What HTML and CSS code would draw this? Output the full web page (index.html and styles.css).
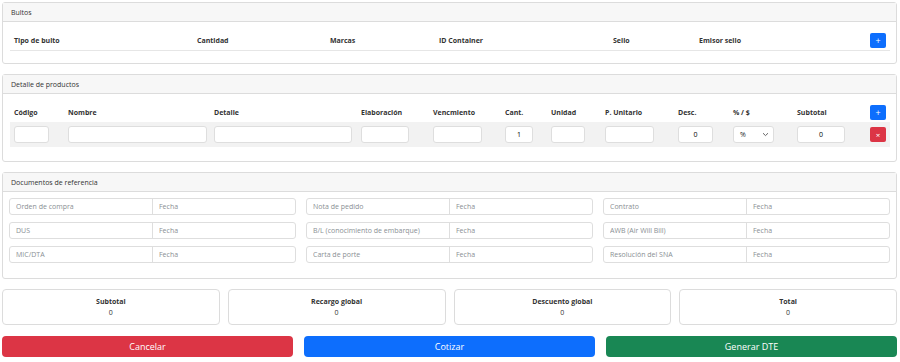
FILE: index.html
```html
<!DOCTYPE html>
<html lang="es">
<head>
  <meta charset="UTF-8" />
  <title>Documento</title>
  <link rel="stylesheet" href="styles.css">
</head>
<body>
  <div class="page">

    <!-- Bultos -->
    <div class="card">
      <div class="card-header">Bultos</div>
      <div class="card-body">
        <div class="grid bultos head">
          <div>Tipo de bulto</div>
          <div>Cantidad</div>
          <div>Marcas</div>
          <div>ID Container</div>
          <div>Sello</div>
          <div>Emisor sello</div>
          <div><button class="btn-sm add">+</button></div>
        </div>
      </div>
    </div>

    <!-- Detalle de productos -->
    <div class="card">
      <div class="card-header">Detalle de productos</div>
      <div class="card-body">
        <div class="grid productos head">
          <div>Código</div>
          <div>Nombre</div>
          <div>Detalle</div>
          <div>Elaboración</div>
          <div>Vencmiento</div>
          <div>Cant.</div>
          <div>Unidad</div>
          <div>P. Unitario</div>
          <div>Desc.</div>
          <div>% / $</div>
          <div>Subtotal</div>
          <div><button class="btn-sm add">+</button></div>
        </div>
        <div class="grid productos row">
          <div><input class="in w35" type="text"></div>
          <div><input class="in w139" type="text"></div>
          <div><input class="in w138" type="text"></div>
          <div><input class="in w48" type="text"></div>
          <div><input class="in w49" type="text"></div>
          <div><input class="in w28 num" type="text" value="1"></div>
          <div><input class="in w34" type="text"></div>
          <div><input class="in w49" type="text"></div>
          <div><input class="in w35 num" type="text" value="0"></div>
          <div>
            <div class="select">
              <span>%</span>
              <svg width="7" height="5" viewBox="0 0 7 5"><path d="M1 1.2 L3.5 3.6 L6 1.2" fill="none" stroke="#555" stroke-width="0.9"/></svg>
            </div>
          </div>
          <div><input class="in w48 num" type="text" value="0"></div>
          <div><button class="btn-sm del">×</button></div>
        </div>
      </div>
    </div>

    <!-- Documentos de referencia -->
    <div class="card">
      <div class="card-header">Documentos de referencia</div>
      <div class="card-body docs">
        <div class="group"><input placeholder="Orden de compra"><input placeholder="Fecha"></div>
        <div class="group"><input placeholder="Nota de pedido"><input placeholder="Fecha"></div>
        <div class="group"><input placeholder="Contrato"><input placeholder="Fecha"></div>
        <div class="group"><input placeholder="DUS"><input placeholder="Fecha"></div>
        <div class="group"><input placeholder="B/L (conocimiento de embarque)"><input placeholder="Fecha"></div>
        <div class="group"><input placeholder="AWB (Air Will Bill)"><input placeholder="Fecha"></div>
        <div class="group"><input placeholder="MIC/DTA"><input placeholder="Fecha"></div>
        <div class="group"><input placeholder="Carta de porte"><input placeholder="Fecha"></div>
        <div class="group"><input placeholder="Resolución del SNA"><input placeholder="Fecha"></div>
      </div>
    </div>

    <!-- Totales -->
    <div class="totals">
      <div class="total-box"><strong>Subtotal</strong><span>0</span></div>
      <div class="total-box"><strong>Recargo global</strong><span>0</span></div>
      <div class="total-box"><strong>Descuento global</strong><span>0</span></div>
      <div class="total-box"><strong>Total</strong><span>0</span></div>
    </div>

    <div class="actions">
      <button class="btn red">Cancelar</button>
      <button class="btn blue">Cotizar</button>
      <button class="btn green">Generar DTE</button>
    </div>

  </div>
</body>
</html>
```

FILE: styles.css
```css
body {
  margin: 0;
  font-family: 'Open Sans', sans-serif;
  font-size: 7px;
  color: #212529;
  background: #fff;
}

.page {
  padding: 2px 3px 0 2px;
}

.card {
  border: 1px solid #dcdcdc;
  border-radius: 3px;
  margin-bottom: 10px;
}

.card-header {
  background: #f7f7f7;
  border-bottom: 1px solid #dcdcdc;
  padding: 5px 8px 4px;
  line-height: 9px;
  color: #333;
}

.card-body {
  padding: 8px 6px 7px 7px;
}

.grid {
  display: grid;
  align-items: center;
}

.grid > div {
  padding: 0 4px;
}

.head {
  height: 20px;
  font-weight: bold;
  color: #333;
  border-bottom: 1px solid #e6e6e6;
}

.bultos {
  grid-template-columns: 183px 133px 109px 174px 86px 171px 1fr;
  margin-bottom: 5px;
}

.productos {
  grid-template-columns: 54px 146px 147px 72px 72px 46px 54px 73px 55px 64px 73px 1fr;
}

.productos.head {
  border-bottom: none;
}

.productos.row {
  background: #f2f2f2;
  height: 25px;
  margin-bottom: 7px;
}

.in {
  box-sizing: border-box;
  height: 17px;
  border: 1px solid #dedede;
  border-radius: 3px;
  background: #fff;
  font-family: inherit;
  font-size: 7px;
  padding: 0 4px;
  display: block;
}

.in.num {
  text-align: center;
}

.w28 { width: 28px; }
.w34 { width: 34px; }
.w35 { width: 35px; }
.w48 { width: 48px; }
.w49 { width: 49px; }
.w138 { width: 138px; }
.w139 { width: 139px; }

.select {
  box-sizing: border-box;
  width: 41px;
  height: 17px;
  border: 1px solid #dedede;
  border-radius: 3px;
  background: #fff;
  display: flex;
  align-items: center;
  justify-content: space-between;
  padding: 0 4px 0 6px;
}

.btn-sm {
  display: block;
  width: 16px;
  height: 15px;
  border: none;
  border-radius: 2px;
  color: #fff;
  font-family: inherit;
  font-size: 9px;
  line-height: 15px;
  padding: 0;
  cursor: pointer;
}

.btn-sm.add { background: #0d6efd; }
.btn-sm.del { background: #dc3545; font-size: 8px; }

.docs {
  display: grid;
  grid-template-columns: repeat(3, 1fr);
  column-gap: 10px;
  row-gap: 7px;
  padding: 6px 6px 15px 6px;
}

.group {
  display: flex;
  height: 17px;
  border: 1px solid #dedede;
  border-radius: 3px;
  box-sizing: border-box;
}

.group input {
  flex: 1;
  min-width: 0;
  border: none;
  background: transparent;
  font-family: inherit;
  font-size: 7px;
  padding: 0 6px;
  outline: none;
}

.group input + input {
  border-left: 1px solid #dedede;
}

.group input::placeholder {
  color: #8a8f94;
}

.totals {
  display: grid;
  grid-template-columns: repeat(4, 1fr);
  gap: 8px;
  margin-bottom: 11px;
}

.total-box {
  height: 36px;
  box-sizing: border-box;
  border: 1px solid #dcdcdc;
  border-radius: 4px;
  display: flex;
  flex-direction: column;
  align-items: center;
  justify-content: center;
  line-height: 11px;
  color: #333;
}

.actions {
  display: grid;
  grid-template-columns: repeat(3, 1fr);
  gap: 11px;
}

.btn {
  height: 21px;
  border: none;
  border-radius: 4px;
  color: #fff;
  font-family: inherit;
  font-size: 9px;
  cursor: pointer;
}

.btn.red { background: #dc3545; }
.btn.blue { background: #0d6efd; }
.btn.green { background: #198754; }
```
